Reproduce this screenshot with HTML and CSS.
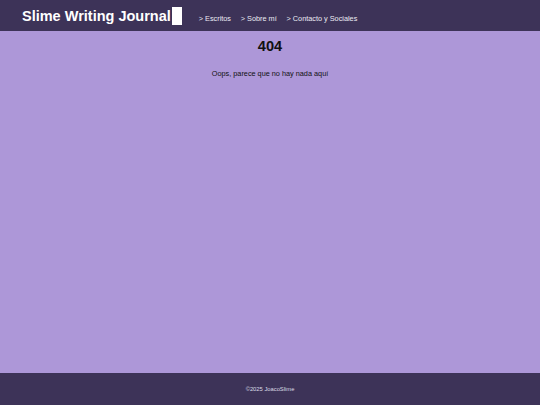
FILE: index.html
```html
<!DOCTYPE html>
<html lang="es">
<head>
<meta charset="utf-8">
<title>Slime Writing Journal</title>
<link rel="stylesheet" href="styles.css">
</head>
<body>
<header class="site-header">
  <div class="brand">
    <span class="brand-text">Slime Writing Journal</span><span class="cursor"></span>
  </div>
  <nav class="nav">
    <a class="nav-link" href="#">&gt; Escritos</a>
    <a class="nav-link" href="#">&gt; Sobre mí</a>
    <a class="nav-link" href="#">&gt; Contacto y Sociales</a>
  </nav>
</header>
<main class="content">
  <h1 class="code">404</h1>
  <p class="message">Oops, parece que no hay nada aquí</p>
</main>
<footer class="site-footer">
  <p class="copy">©2025 JoacoSlime</p>
</footer>
</body>
</html>
```
FILE: styles.css
```css
html, body {
  margin: 0;
  padding: 0;
}
body {
  font-family: "Liberation Sans", Arial, sans-serif;
  min-height: 100vh;
  display: flex;
  flex-direction: column;
  background: #ad97d8;
}
.site-header {
  height: 31px;
  box-sizing: border-box;
  background: #3d3358;
  display: flex;
  align-items: center;
  padding: 0 22px;
}
.brand {
  display: flex;
  align-items: center;
  color: #ffffff;
  font-weight: bold;
  font-size: 14.5px;
}
.cursor {
  display: inline-block;
  width: 10px;
  height: 18px;
  background: #ffffff;
  margin-left: 1px;
}
.nav {
  display: flex;
  gap: 9.8px;
  margin-left: 17px;
  margin-top: 6px;
}
.nav-link {
  color: #ececf4;
  text-decoration: none;
  font-size: 7.3px;
}
.content {
  flex: 1;
  text-align: center;
  color: #111111;
}
.code {
  font-size: 14.6px;
  margin: 7px 0 0;
}
.message {
  font-size: 7.3px;
  margin: 15px 0 0;
}
.site-footer {
  height: 32px;
  background: #3d3358;
  display: flex;
  align-items: center;
  justify-content: center;
}
.copy {
  margin: 0;
  color: #dcdce6;
  font-size: 5.8px;
}
```
